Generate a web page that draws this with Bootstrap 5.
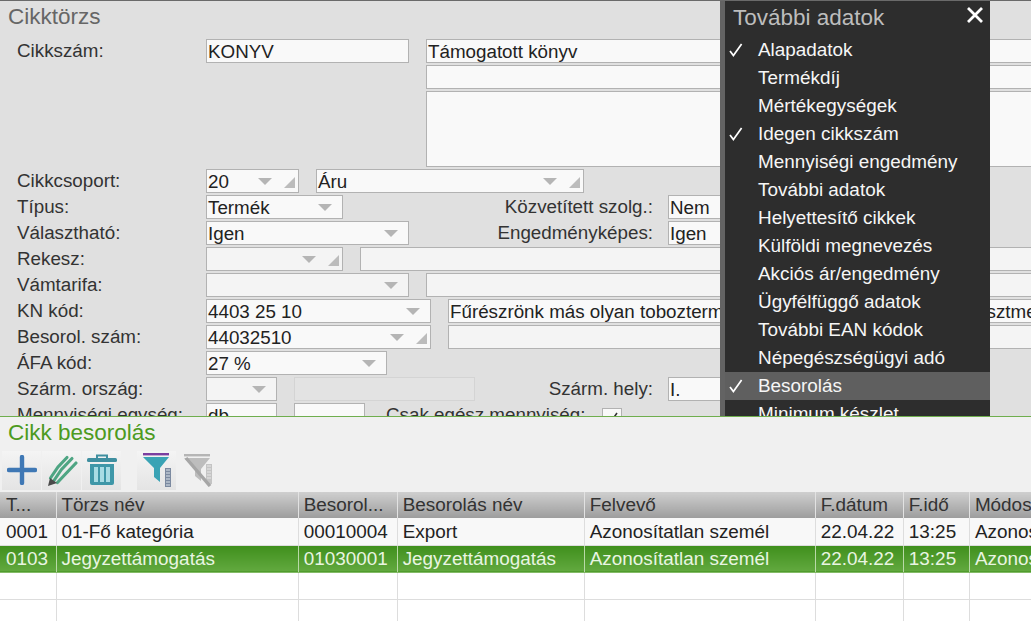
<!DOCTYPE html>
<html lang="hu">
<head>
<meta charset="utf-8">
<title>Cikktörzs</title>
<link rel="stylesheet" href="https://cdn.jsdelivr.net/npm/bootstrap@5.3.0/dist/css/bootstrap.min.css">
<style>
html,body{height:621px;overflow:hidden}
body{font-family:"Liberation Sans",Arial,sans-serif;font-size:18.8px;color:#333;background:#f0f0f0;line-height:22px}
.shell{width:1031px;height:621px;overflow:hidden}
.upper{height:416px;background:#e0e0e0;border-top:1px solid #6a6a6a;overflow:hidden;flex:none}
.pane-title{font-size:22.5px;line-height:26px;color:#666;padding:3px 0 0 8px;height:38px}
.frow{height:26px;padding-left:17px;flex:none}
.frow.tallrow{height:78px}
.flabel{width:189px;flex:none;line-height:24px;color:#333}
.fld{height:24px;background:#f9f9f9;border:1px solid #b2b2b2;padding:0 1px;line-height:24px;color:#222;white-space:nowrap;overflow:hidden;flex:none;position:relative}
.fld.tall{height:76px}
.fld.dim{background:#f4f4f4}
.fld.off{background:#e3e3e3;border-color:#d4d4d4}
.gapbox{width:203px;flex:none}
.fw71{width:71px}.fw93{width:93px}.fw137{width:137px}.fw181{width:181px}.fw203{width:203px}.fw225{width:225px}.fw268{width:268px}.fwide{width:760px}
.ml17{margin-left:17px}
.rlab{flex:none;text-align:right;padding-right:15px;line-height:24px}
.rl1{width:325px}.rl2{width:193px}.rl3{width:259px}
.csak{width:216px;margin-left:21px;flex:none;line-height:24px}
.chk{width:20px;height:20px;margin-top:5px;flex:none;background:#f9f9f9;border:1px solid #b2b2b2}
.arr{position:absolute;top:8px;width:0;height:0;border-left:7px solid transparent;border-right:7px solid transparent;border-top:7px solid #b5b5b5}
.arr.a1{right:10px}
.arr.a2{right:26px}
.crn{position:absolute;right:3px;bottom:4px;width:0;height:0;border-left:11px solid transparent;border-bottom:11px solid #bcbcbc}
.side{position:absolute;left:720px;top:0;width:270px;height:416px;background:#2d2d2d;border-left:5px solid #636363;overflow:hidden;color:#fff}
.side-head{height:35px;flex:none;padding:4px 6px 0 8px;font-size:22.5px;line-height:26px;color:#bdbdbd}
.side-x{width:18px;height:18px;margin-top:1px}
.side-item{height:28px;line-height:27px;font-size:18.9px;padding-left:8px;flex:none;color:#f6f6f6;white-space:nowrap}
.side-item.hot{background:#5f5f5f}
.tick{width:30px;flex:none;display:flex;align-items:center;height:28px;margin-left:-5px}
.lower{background:#f0f0f0;border-top:1px solid #6fae4e;flex:1 1 auto;overflow:hidden;min-height:0}
.lower-title{font-size:22.5px;line-height:26px;color:#4c9a21;padding:3px 0 0 8px;height:34px}
.tools{height:40px;padding:0 0 0 2px;gap:1px}
.tbtn{width:39px;height:39px;background:linear-gradient(#f4f4f4,#e4e4e4);display:flex;align-items:center;justify-content:center;flex:none;padding:0;border:0}
.tbtn.plain{background:none;width:38px}
.tsep{width:14px;flex:none}
.tsep2{width:1px;flex:none}
.gridwrap{margin-top:2px;background:#fff;height:130px;overflow:hidden}
.dgrid{table-layout:fixed;width:1062px;border-collapse:collapse;margin:0;font-size:18.9px;color:#222}
.dgrid th,.dgrid td{height:27px;padding:0 0 0 5px;line-height:24px;white-space:nowrap;overflow:hidden;font-weight:400;vertical-align:middle;border-right:1px solid #ddd;border-bottom:1px solid #ddd;background:#fff}
.dgrid th:first-child,.dgrid td:first-child{padding-left:6px}
.dgrid th{height:26px;background:linear-gradient(#cfcfcf,#9d9d9d);color:#333;border-right:1px solid #e2e2e2;border-bottom:0}
.dgrid tr.r1 td{background:#f8f8f8}
.dgrid tr.r2 td{background:linear-gradient(#3f8f1c,#62a93f);color:#e9f5e2;border-right:1px solid #b9d9a8;border-bottom:1px solid #84bb67}
.c1{width:56px}.c2{width:242px}.c3{width:99px}.c4{width:187px}.c5{width:231px}.c6{width:88px}.c7{width:66px}.c8{width:92px}
</style>
</head>
<body>
<div class="shell d-flex flex-column">
  <div class="upper position-relative">
    <div class="pane-title">Cikktörzs</div>
    <div class="frow d-flex"><div class="flabel">Cikkszám:</div><div class="fld fw203">KONYV</div><div class="fld fwide ml17">Támogatott könyv</div></div>
    <div class="frow d-flex"><div class="flabel"></div><div class="gapbox"></div><div class="fld fwide ml17"></div></div>
    <div class="frow tallrow d-flex"><div class="flabel"></div><div class="gapbox"></div><div class="fld fwide tall ml17"></div></div>
    <div class="frow d-flex"><div class="flabel">Cikkcsoport:</div><div class="fld fw93">20<i class="arr a2"></i><i class="crn"></i></div><div class="fld fw268 ml17">Áru<i class="arr a2"></i><i class="crn"></i></div></div>
    <div class="frow d-flex"><div class="flabel">Típus:</div><div class="fld fw137">Termék<i class="arr a1"></i></div><div class="rlab rl1">Közvetített szolg.:</div><div class="fld fw137">Nem</div></div>
    <div class="frow d-flex"><div class="flabel">Választható:</div><div class="fld fw203">Igen<i class="arr a1"></i></div><div class="rlab rl3">Engedményképes:</div><div class="fld fw137">Igen</div></div>
    <div class="frow d-flex"><div class="flabel">Rekesz:</div><div class="fld dim fw137"><i class="arr a2"></i><i class="crn"></i></div><div class="fld dim fwide ml17"></div></div>
    <div class="frow d-flex"><div class="flabel">Vámtarifa:</div><div class="fld dim fw203"><i class="arr a1"></i></div><div class="fld dim fwide ml17"></div></div>
    <div class="frow d-flex"><div class="flabel">KN kód:</div><div class="fld fw225">4403 25 10<i class="arr a1"></i></div><div class="fld fwide ml17">Fűrészrönk más olyan toboztermésű fából amelynek kisebb keresztmetszete</div></div>
    <div class="frow d-flex"><div class="flabel">Besorol. szám:</div><div class="fld fw225">44032510<i class="arr a2"></i><i class="crn"></i></div><div class="fld dim fwide ml17"></div></div>
    <div class="frow d-flex"><div class="flabel">ÁFA kód:</div><div class="fld fw181">27 %<i class="arr a1"></i></div></div>
    <div class="frow d-flex"><div class="flabel">Szárm. ország:</div><div class="fld dim fw71"><i class="arr a1"></i></div><div class="fld off fw181 ml17"></div><div class="rlab rl2">Szárm. hely:</div><div class="fld fw137">I.</div></div>
    <div class="frow d-flex"><div class="flabel">Mennyiségi egység:</div><div class="fld fw71">db</div><div class="fld fw71 ml17"></div><div class="csak">Csak egész mennyiség:</div><div class="chk d-flex align-items-center justify-content-center"><svg width="14" height="14" viewBox="0 0 14 14"><path d="M2 8l3 4 7-10" fill="none" stroke="#333" stroke-width="1.6"/></svg></div></div>

    <div class="side d-flex flex-column">
      <div class="side-head d-flex justify-content-between"><span>További adatok</span><svg class="side-x" viewBox="0 0 18 18"><path d="M2 2l14 14M16 2L2 16" stroke="#fff" stroke-width="2.8" fill="none"/></svg></div>
      <div class="side-item d-flex"><span class="tick"><svg width="16" height="16" viewBox="0 0 16 16"><path d="M2 9l3.4 4.6L13.6 2" fill="none" stroke="#fff" stroke-width="1.7"/></svg></span>Alapadatok</div>
      <div class="side-item d-flex"><span class="tick"></span>Termékdíj</div>
      <div class="side-item d-flex"><span class="tick"></span>Mértékegységek</div>
      <div class="side-item d-flex"><span class="tick"><svg width="16" height="16" viewBox="0 0 16 16"><path d="M2 9l3.4 4.6L13.6 2" fill="none" stroke="#fff" stroke-width="1.7"/></svg></span>Idegen cikkszám</div>
      <div class="side-item d-flex"><span class="tick"></span>Mennyiségi engedmény</div>
      <div class="side-item d-flex"><span class="tick"></span>További adatok</div>
      <div class="side-item d-flex"><span class="tick"></span>Helyettesítő cikkek</div>
      <div class="side-item d-flex"><span class="tick"></span>Külföldi megnevezés</div>
      <div class="side-item d-flex"><span class="tick"></span>Akciós ár/engedmény</div>
      <div class="side-item d-flex"><span class="tick"></span>Ügyfélfüggő adatok</div>
      <div class="side-item d-flex"><span class="tick"></span>További EAN kódok</div>
      <div class="side-item d-flex"><span class="tick"></span>Népegészségügyi adó</div>
      <div class="side-item hot d-flex"><span class="tick"><svg width="16" height="16" viewBox="0 0 16 16"><path d="M2 9l3.4 4.6L13.6 2" fill="none" stroke="#fff" stroke-width="1.7"/></svg></span>Besorolás</div>
      <div class="side-item d-flex"><span class="tick"></span>Minimum készlet</div>
    </div>
  </div>

  <div class="lower d-flex flex-column">
    <div class="lower-title">Cikk besorolás</div>
    <div class="tools d-flex align-items-start">
      <button class="tbtn" type="button" aria-label="Új"><svg width="30" height="30" viewBox="0 0 30 30"><path d="M15 2v26M2 15h26" stroke="#3f78b5" stroke-width="4.4" stroke-linecap="round"/></svg></button>
      <button class="tbtn" type="button" aria-label="Szerkesztés"><svg width="32" height="32" viewBox="0 0 32 32"><path d="M4.5 24L12 13 21 3.5" fill="none" stroke="#4ea583" stroke-width="3.1" stroke-linecap="round"/><path d="M8 26.5L15.5 15.5 26 4.5" fill="none" stroke="#4ea583" stroke-width="3.1" stroke-linecap="round"/><path d="M11.5 28.5L19.5 20 30 9" fill="none" stroke="#4ea583" stroke-width="3.1" stroke-linecap="round"/><path d="M2 32l2-8 7 5z" fill="#4a4a4a"/></svg></button>
      <button class="tbtn" type="button" aria-label="Törlés"><svg width="32" height="32" viewBox="0 0 32 32"><path d="M11 4V1.5h10V4" fill="none" stroke="#3f8fa0" stroke-width="2"/><rect x="1" y="4" width="30" height="4" rx="1.5" fill="#3f8fa0"/><path d="M4 10h24v19a2 2 0 0 1-2 2H6a2 2 0 0 1-2-2z" fill="#3f97a8"/><path d="M8 13h4v15H8zM14 13h4v15h-4zM20 13h4v15h-4z" fill="#a8dce4"/></svg></button>
      <div class="tsep"></div>
      <button class="tbtn" type="button" aria-label="Szűrő"><svg width="30" height="36" viewBox="0 0 30 36"><rect x="1" y="1" width="26" height="2.4" fill="#7b3fa0"/><path d="M1 5h26l-9 11v14l-6-5v-9z" fill="#3aa3b5"/><rect x="23" y="16" width="6" height="19" fill="#7c8aa0"/><path d="M24 18h4M24 21h4M24 24h4M24 27h4M24 30h4M24 33h4" stroke="#dbe3ea"/></svg></button>
      <div class="tsep2"></div>
      <button class="tbtn plain" type="button" aria-label="Szűrő törlése"><svg width="30" height="34" viewBox="0 0 30 34"><rect x="1" y="1" width="26" height="2.4" fill="#b5b5b5"/><path d="M1 5h26l-9 11v12l-6-5v-7z" fill="#bdbdbd"/><rect x="23" y="11" width="6" height="20" fill="#c4c4c4"/><path d="M3 5l24 28" stroke="#a6a6a6" stroke-width="3.4"/><path d="M24 13h4M24 16h4M24 19h4M24 22h4M24 25h4" stroke="#e8e8e8"/></svg></button>
    </div>
    <div class="gridwrap">
      <table class="dgrid">
        <colgroup><col class="c1"><col class="c2"><col class="c3"><col class="c4"><col class="c5"><col class="c6"><col class="c7"><col class="c8"></colgroup>
        <thead><tr><th>T...</th><th>Törzs név</th><th>Besorol...</th><th>Besorolás név</th><th>Felvevő</th><th>F.dátum</th><th>F.idő</th><th>Módosító</th></tr></thead>
        <tbody>
          <tr class="r1"><td>0001</td><td>01-Fő kategória</td><td>00010004</td><td>Export</td><td>Azonosítatlan személ</td><td>22.04.22</td><td>13:25</td><td>Azonosítatlan</td></tr>
          <tr class="r2"><td>0103</td><td>Jegyzettámogatás</td><td>01030001</td><td>Jegyzettámogatás</td><td>Azonosítatlan személ</td><td>22.04.22</td><td>13:25</td><td>Azonosítatlan</td></tr>
          <tr><td></td><td></td><td></td><td></td><td></td><td></td><td></td><td></td></tr>
          <tr><td></td><td></td><td></td><td></td><td></td><td></td><td></td><td></td></tr>
        </tbody>
      </table>
    </div>
  </div>
</div>
<script src="https://cdn.jsdelivr.net/npm/bootstrap@5.3.0/dist/js/bootstrap.bundle.min.js"></script>
</body>
</html>
